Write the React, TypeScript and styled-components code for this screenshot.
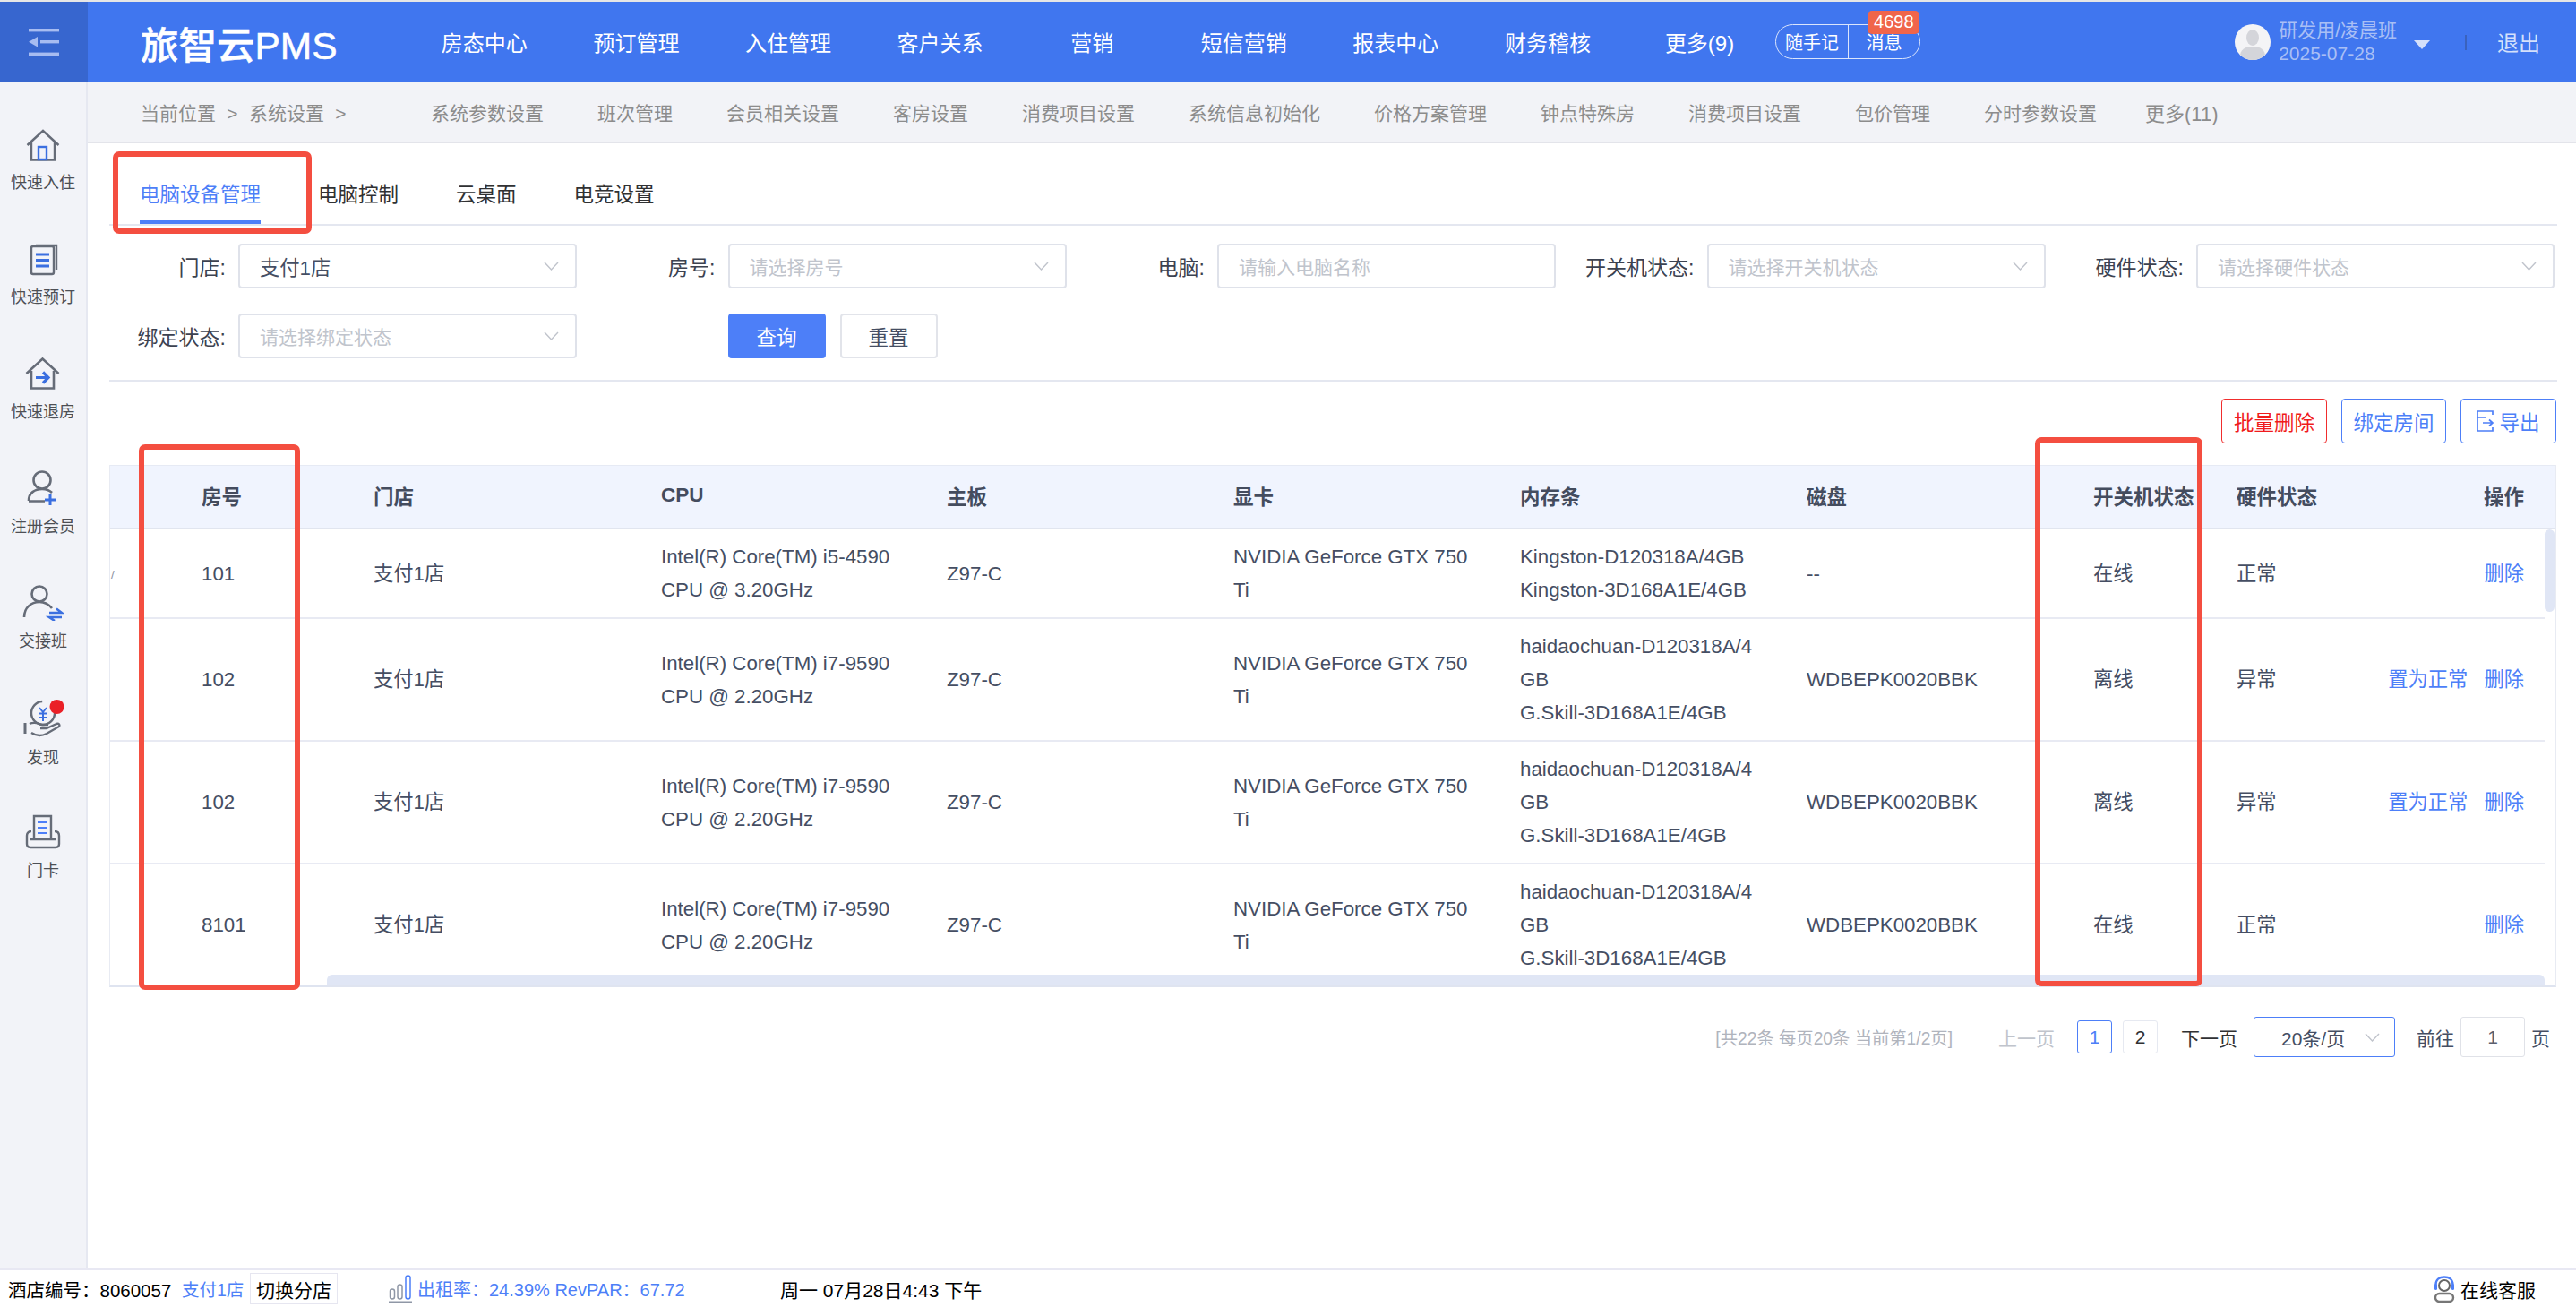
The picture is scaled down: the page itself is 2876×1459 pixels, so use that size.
import React from 'react';
import styled, { createGlobalStyle } from 'styled-components';

const GlobalStyle = createGlobalStyle`
  * { box-sizing: border-box; }
  html, body { margin: 0; padding: 0; height: 100%; background: #fff; }
  body {
    font-family: "Liberation Sans", "Noto Sans CJK SC", sans-serif;
    overflow: hidden;
  }
`;

const Page = styled.div`
  position: relative;
  height: 100vh;
  display: flex;
  flex-direction: column;
  border-top: 2px solid #e6e6e6;
`;

/* ---------- header ---------- */
const Header = styled.header`
  height: 90px;
  flex: none;
  display: flex;
  align-items: center;
  background: #4076ef;
  color: #fff;
`;
const MenuToggle = styled.div`
  width: 98px;
  height: 100%;
  flex: none;
  display: flex;
  align-items: center;
  justify-content: center;
  background: #3766cf;
`;
const Logo = styled.div`
  width: 358px;
  flex: none;
  padding-left: 59px;
  font-size: 42.5px;
  font-weight: 500;
  -webkit-text-stroke: 0.5px #fff;
`;
const TopNav = styled.nav`
  display: flex;
  flex: none;
  margin-top: -2px;
`;
const TopNavItem = styled.a`
  width: 169.6px;
  text-align: center;
  font-size: 24px;
  color: #fff;
`;
const NotePill = styled.div`
  position: relative;
  width: 162px;
  height: 39px;
  margin-top: -2px;
  flex: none;
  display: flex;
  border: 1.5px solid #dbe5fc;
  border-radius: 20px;
`;
const NotePart = styled.span<{ $divided?: boolean }>`
  flex: 1;
  display: flex;
  align-items: center;
  justify-content: center;
  font-size: 20px;
  color: #fff;
  border-left: ${(p) => (p.$divided ? '1.5px solid #dbe5fc' : 'none')};
`;
const Badge = styled.span`
  position: absolute;
  left: 102px;
  top: -16px;
  width: 58px;
  height: 26px;
  display: flex;
  align-items: center;
  justify-content: center;
  border-radius: 5px;
  background: #f0654a;
  color: #fff;
  font-size: 20px;
`;
const UserBlock = styled.div`
  margin-left: auto;
  display: flex;
  align-items: center;
  padding-right: 40px;
`;
const UserText = styled.div`
  margin-left: 9px;
  font-size: 21px;
  line-height: 26px;
  color: #a9bff5;
`;
const Caret = styled.span`
  width: 0;
  height: 0;
  margin-left: 19px;
  margin-top: 6px;
  border-left: 9px solid transparent;
  border-right: 9px solid transparent;
  border-top: 10px solid #d5e0fa;
`;
const UserDivider = styled.span`
  width: 2px;
  height: 17px;
  margin-left: 39px;
  background: #3a62bd;
`;
const Logout = styled.a`
  margin-left: 34px;
  margin-top: -2px;
  font-size: 24px;
  color: #d4e0fb;
`;

/* ---------- body ---------- */
const Body = styled.div`
  flex: 1;
  min-height: 0;
  display: flex;
`;
const Sidebar = styled.aside`
  width: 98px;
  flex: none;
  padding-top: 49px;
  background: #f2f3f8;
  border-right: 2px solid #e6e8f1;
`;
const SideItem = styled.a`
  height: 128px;
  display: flex;
  flex-direction: column;
  align-items: center;
  color: #4d4f55;
  font-size: 18px;
  line-height: 24px;
`;
const SideLabel = styled.span`
  margin-top: 11px;
`;
const Main = styled.main`
  flex: 1;
  min-width: 0;
  display: flex;
  flex-direction: column;
`;
const SubNav = styled.div`
  height: 68px;
  flex: none;
  display: flex;
  align-items: center;
  padding-left: 59px;
  background: #f2f3f7;
  border-bottom: 2px solid #e3e4ea;
  font-size: 21px;
  color: #8c8c8c;
`;
const Crumb = styled.span`
  flex: none;
  width: 324px;
  word-spacing: 6.5px;
`;
const SubNavItem = styled.a`
  flex: none;
  margin-right: 60px;
  &:last-child {
    margin-left: -6px;
    font-size: 22px;
  }
`;
const Content = styled.div`
  flex: 1;
  padding: 0 21px 0 24px;
`;
const Tabs = styled.div`
  height: 92px;
  display: flex;
  padding: 40px 0 0 2px;
  border-bottom: 2px solid #e4e7f0;
`;
const Tab = styled.a<{ $active?: boolean }>`
  position: relative;
  height: 50px;
  padding: 0 32px;
  font-size: 22.5px;
  line-height: 36px;
  color: ${(p) => (p.$active ? '#4d7ff8' : '#303133')};
  &::after {
    content: '';
    display: ${(p) => (p.$active ? 'block' : 'none')};
    position: absolute;
    left: 32px;
    right: 32px;
    bottom: 0;
    height: 4px;
    background: #4d7ff8;
  }
`;

/* ---------- filter form ---------- */
const FilterForm = styled.div`
  display: grid;
  grid-template-columns: repeat(4, 546.5px) 1fr;
  row-gap: 28px;
  margin-top: 20px;
  padding-bottom: 24px;
  border-bottom: 2px solid #e4e7f0;
`;
const FormItem = styled.div`
  display: flex;
  align-items: center;
`;
const FormLabel = styled.label`
  width: 130px;
  flex: none;
  margin-right: 14px;
  text-align: right;
  white-space: nowrap;
  font-size: 23px;
  color: #3c4250;
`;
const Field = styled.div<{ $wide?: boolean }>`
  width: ${(p) => (p.$wide ? '400px' : '378px')};
  height: 50px;
  flex: none;
  display: flex;
  align-items: center;
  justify-content: space-between;
  padding: 0 18px 0 22px;
  border: 2px solid #dfe2ea;
  border-radius: 4px;
  font-size: 21px;
  color: #c0c4cc;
`;
const FieldValue = styled.span`
  color: #454e63;
  font-size: 22.3px;
`;
const FormButtons = styled.div`
  display: flex;
  gap: 16px;
  margin-left: 144px;
`;
const SearchButton = styled.button<{ $primary?: boolean }>`
  width: 109px;
  height: 50px;
  padding: 0;
  border: 2px solid ${(p) => (p.$primary ? '#4d7ff8' : '#e2e4ea')};
  border-radius: 4px;
  background: ${(p) => (p.$primary ? '#4d7ff8' : '#fff')};
  color: ${(p) => (p.$primary ? '#fff' : '#454e63')};
  font: inherit;
  font-size: 22.5px;
`;

/* ---------- toolbar + table ---------- */
const Toolbar = styled.div`
  display: flex;
  justify-content: flex-end;
  gap: 16px;
  margin-top: 19px;
  padding-right: 1px;
`;
const ActionButton = styled.button<{ $danger?: boolean; $w: number }>`
  width: ${(p) => p.$w}px;
  height: 50px;
  padding: 0;
  display: flex;
  align-items: center;
  justify-content: center;
  gap: 6px;
  background: #fff;
  border: 1.5px solid ${(p) => (p.$danger ? '#f02d2d' : '#4d7ff8')};
  border-radius: 4px;
  color: ${(p) => (p.$danger ? '#f01c1c' : '#4d7ff8')};
  font: inherit;
  font-size: 22.5px;
`;
const TableBox = styled.div`
  position: relative;
  width: 2732px;
  margin-top: 24px;
  border-left: 1px solid #e8ebf3;
  border-right: 1px solid #e8ebf3;
  border-bottom: 2px solid #dfe4f0;
`;
const columns = '102px 192px 321px 319px 320px 320px 320px 320px 160px 150px 1fr';
const HeadRow = styled.div`
  height: 72px;
  display: grid;
  grid-template-columns: ${columns};
  align-items: center;
  padding: 0 35px 3px 0;
  background: #f0f4fe;
  border-top: 1px solid #e6eaf4;
  border-bottom: 2px solid #e1e5ef;
  font-size: 22.5px;
  font-weight: 700;
  color: #444c5e;
`;
const HeadCell = styled.div<{ $right?: boolean }>`
  white-space: nowrap;
  text-align: ${(p) => (p.$right ? 'right' : 'left')};
`;
const TableBody = styled.div`
  height: 509px;
  overflow: hidden;
`;
const Row = styled.div`
  display: grid;
  grid-template-columns: ${columns};
  align-items: center;
  margin-right: 12px;
  padding: 12px 23px 12px 0;
  border-bottom: 2px solid #e8eaf3;
  font-size: 22.3px;
  line-height: 37px;
  color: #454e63;
`;
const Cell = styled.div<{ $right?: boolean }>`
  white-space: nowrap;
  display: ${(p) => (p.$right ? 'flex' : 'block')};
  justify-content: flex-end;
  gap: 18px;
`;
const CellLine = styled.div`
  white-space: nowrap;
`;
const HiddenColumnEdge = styled.span`
  font-size: 13px;
  color: #8a90a0;
  padding-left: 1px;
`;
const LinkAction = styled.a`
  color: #4d7ff8;
`;
const ScrollThumbY = styled.div`
  position: absolute;
  right: 1px;
  top: 72px;
  width: 11px;
  height: 92px;
  border-radius: 6px;
  background: #e0e6f5;
`;
const ScrollThumbX = styled.div`
  position: absolute;
  left: 242px;
  right: 12px;
  bottom: 0;
  height: 12px;
  border-radius: 6px 6px 0 0;
  background: #e0e6f5;
`;

/* ---------- pagination ---------- */
const Pager = styled.div`
  display: flex;
  justify-content: flex-end;
  align-items: center;
  height: 45px;
  margin-top: 33px;
  padding-right: 8px;
  font-size: 21px;
  color: #454e63;
`;
const PagerText = styled.span<{ $ml: number; $tone?: string }>`
  margin-left: ${(p) => p.$ml}px;
  color: ${(p) => p.$tone || '#454e63'};
  white-space: nowrap;
`;
const PagerSummary = styled.span`
  font-size: 19.3px;
  color: #b0b4bd;
  white-space: nowrap;
`;
const PageNo = styled.a<{ $ml: number; $active?: boolean }>`
  width: 39px;
  height: 37px;
  margin-left: ${(p) => p.$ml}px;
  display: flex;
  align-items: center;
  justify-content: center;
  border: 1.5px solid ${(p) => (p.$active ? '#4d7ff8' : '#e6e9f1')};
  border-radius: 3px;
  color: ${(p) => (p.$active ? '#4d7ff8' : '#303133')};
`;
const SizeSelect = styled.div`
  width: 158px;
  height: 45px;
  margin-left: 18px;
  padding: 0 16px 0 30px;
  display: flex;
  align-items: center;
  justify-content: space-between;
  border: 1.5px solid #4d7ff8;
  border-radius: 3px;
  color: #454e63;
  font-size: 21px;
`;
const JumpInput = styled.div`
  width: 72px;
  height: 45px;
  margin-left: 7px;
  display: flex;
  align-items: center;
  justify-content: center;
  border: 1.5px solid #e0e2e8;
  border-radius: 3px;
  color: #5a6070;
`;

/* ---------- footer ---------- */
const Footer = styled.footer`
  height: 43px;
  flex: none;
  display: flex;
  align-items: center;
  padding: 0 45px 0 9px;
  background: #fff;
  border-top: 2px solid #e8e8f3;
  font-size: 20.5px;
  color: #000;
  white-space: nowrap;
`;
const StoreNo = styled.span`
  width: 194px;
  flex: none;
`;
const StoreName = styled.a`
  width: 76px;
  flex: none;
  color: #4d7ff8;
  font-size: 19.5px;
`;
const SwitchStore = styled.a`
  width: 98px;
  height: 35px;
  flex: none;
  display: flex;
  align-items: center;
  justify-content: center;
  border: 1.5px solid #e6e6f0;
  font-size: 21px;
`;
const OccupancyBlock = styled.div`
  width: 437px;
  flex: none;
  display: flex;
  align-items: center;
  gap: 6px;
  margin-left: 57px;
  color: #4d7ff8;
  font-size: 20px;
`;
const Clock = styled.span`
  font-size: 21px;
`;
const Support = styled.a`
  margin-left: auto;
  display: flex;
  align-items: center;
  gap: 6px;
  font-size: 21px;
`;

/* ---------- red annotation boxes laid over the screenshot ---------- */
const Mark = styled.div<{ $x: number; $y: number; $w: number; $h: number }>`
  position: absolute;
  left: ${(p) => p.$x}px;
  top: ${(p) => p.$y}px;
  width: ${(p) => p.$w}px;
  height: ${(p) => p.$h}px;
  border: 6px solid #f44e40;
  border-radius: 7px;
  pointer-events: none;
`;

/* ---------- drawings ---------- */
const GRAY = '#666c78';
const BLUE = '#3b6fe0';

const ToggleIcon = () => (
  <svg width="34" height="30" viewBox="0 0 34 30" fill="#a7bcf1">
    <rect x="0" y="0" width="34" height="3.4" />
    <rect x="13" y="13" width="21" height="3.4" />
    <rect x="0" y="26.6" width="34" height="3.4" />
    <path d="M0 14.7 L10 9 V20.4 Z" />
  </svg>
);
const ChevronDown = ({ color = '#c0c4cc' }: { color?: string }) => (
  <svg width="17" height="10" viewBox="0 0 17 10" fill="none" stroke={color} strokeWidth="1.4">
    <path d="M1 1 L8.5 9 L16 1" />
  </svg>
);
const HomeIcon = () => (
  <svg width="40" height="40" viewBox="0 0 40 40" fill="none" strokeWidth="2.4">
    <path d="M2.5 21 L20 5 L37.5 21" stroke={GRAY} />
    <path d="M7 17 V37.5 H33 V17" stroke={GRAY} />
    <rect x="15" y="23" width="9" height="14" stroke={BLUE} />
  </svg>
);
const BookIcon = () => (
  <svg width="40" height="40" viewBox="0 0 40 40" fill="none">
    <rect x="7" y="6" width="25" height="31" rx="2" stroke={GRAY} strokeWidth="2.4" />
    <path d="M12 5 H35 V32" stroke={GRAY} strokeWidth="2.4" />
    <path d="M12 15 H27 M12 21.5 H27 M12 28 H27" stroke={BLUE} strokeWidth="3" />
  </svg>
);
const CheckoutIcon = () => (
  <svg width="40" height="40" viewBox="0 0 40 40" fill="none">
    <path d="M1.5 20 L19.5 3.5 L37.5 20" stroke={GRAY} strokeWidth="2.6" />
    <path d="M7 17 V36.5 H32 V17" stroke={GRAY} strokeWidth="2.6" />
    <path d="M12 24.5 H25 M20 18.5 L26 24.5 L20 30.5" stroke={BLUE} strokeWidth="3.2" />
  </svg>
);
const AddUserIcon = () => (
  <svg width="40" height="40" viewBox="0 0 40 40" fill="none">
    <circle cx="19" cy="11" r="9.5" stroke={GRAY} strokeWidth="2.6" />
    <path d="M4 34 C4 25 11 21 19 21 C24 21 27 22 30 25 M4 34.5 H22" stroke={GRAY} strokeWidth="2.6" />
    <path d="M22 33 H34 M28 27 V39" stroke={BLUE} strokeWidth="3" />
  </svg>
);
const SwapUserIcon = () => (
  <svg width="46" height="40" viewBox="0 0 46 40" fill="none">
    <circle cx="19" cy="10" r="8.5" stroke={GRAY} strokeWidth="2.6" />
    <path d="M2 36 C2 25 10 19 19 19 C25 19 29 21 33 26" stroke={GRAY} strokeWidth="2.6" />
    <path d="M30 31 H44 L38 26.5 M44 36 H30 L36 40" stroke={BLUE} strokeWidth="2.6" />
  </svg>
);
const DiscoverIcon = () => (
  <svg width="46" height="42" viewBox="0 0 46 42" fill="none">
    <circle cx="23" cy="15" r="13" stroke={GRAY} strokeWidth="2.4" strokeDasharray="60 22" />
    <path d="M19 9 L23 14 L27 9 M18.5 15.5 H27.5 M18.5 20 H27.5 M23 14 V24" stroke={BLUE} strokeWidth="2" />
    <path d="M3 26 V38" stroke={GRAY} strokeWidth="3" />
    <path d="M8 27 C14 24 18 27 22 28 H29 M10 37 C16 41 21 41 27 38 L41 30 C42 28 41 26 38 27 L27 32 H20" stroke={GRAY} strokeWidth="2.4" />
    <circle cx="38.5" cy="8" r="8" fill="#ea2027" />
  </svg>
);
const CardIcon = () => (
  <svg width="40" height="40" viewBox="0 0 40 40" fill="none">
    <path d="M10 28 V2 H29 V28 M5 28 H35" stroke={GRAY} strokeWidth="2.4" />
    <path d="M7 19 C3 19 2 22 2 24 V33 C2 36 4 37 6 37 H34 C36 37 38 36 38 33 V24 C38 22 37 19 33 19" stroke={GRAY} strokeWidth="2.4" />
    <path d="M14 9 H25 M14 15 H25 M14 21 H25" stroke="#4d7ff8" strokeWidth="2.2" />
  </svg>
);
const AvatarIcon = () => (
  <svg width="40" height="40" viewBox="0 0 40 40">
    <circle cx="20" cy="20" r="20" fill="#f4f4f6" />
    <ellipse cx="20" cy="15" rx="7" ry="9" fill="#d4d5da" />
    <path d="M6 34 C8 26 14 25 20 25 C26 25 32 26 34 34 C30 38 25 40 20 40 C15 40 10 38 6 34 Z" fill="#d4d5da" />
  </svg>
);
const ExportIcon = () => (
  <svg width="19" height="24" viewBox="0 0 19 24" fill="none" stroke="#4d7ff8" strokeWidth="1.7">
    <path d="M18 5 V1 H1 V23 H18 V19" />
    <path d="M1 8 H10 M7 14 H18 M14 10.5 L18 14 L14 17.5" />
  </svg>
);
const ChartIcon = () => (
  <svg width="26" height="32" viewBox="0 0 26 32" fill="none">
    <rect x="1.5" y="16" width="5" height="11" rx="2.5" stroke="#8f97a6" strokeWidth="1.5" />
    <rect x="10" y="11" width="5" height="16" rx="2.5" stroke="#8f97a6" strokeWidth="1.5" />
    <rect x="19" y="1" width="5" height="26" rx="2.5" stroke="#4d7ff8" strokeWidth="1.5" />
    <path d="M0 30.5 H26" stroke="#8f97a6" strokeWidth="2" />
  </svg>
);
const SupportIcon = () => (
  <svg width="24" height="30" viewBox="0 0 24 30" fill="none">
    <circle cx="12" cy="11" r="6" stroke="#666" strokeWidth="2" />
    <path d="M2.5 13 V10 C2.5 4.5 6.5 1.5 12 1.5 C17.5 1.5 21.5 4.5 21.5 10 V13" stroke="#4d7ff8" strokeWidth="2.4" />
    <rect x="1" y="9" width="3" height="7" rx="1.5" fill="#4d7ff8" />
    <rect x="20" y="9" width="3" height="7" rx="1.5" fill="#4d7ff8" />
    <rect x="2" y="20" width="20" height="9" rx="4.5" stroke="#777" strokeWidth="2.4" />
  </svg>
);

/* ---------- data ---------- */
const topNav = ['房态中心', '预订管理', '入住管理', '客户关系', '营销', '短信营销', '报表中心', '财务稽核', '更多(9)'];
const subNav = [
  '系统参数设置', '班次管理', '会员相关设置', '客房设置', '消费项目设置', '系统信息初始化',
  '价格方案管理', '钟点特殊房', '消费项目设置', '包价管理', '分时参数设置', '更多(11)',
];
const sideItems = [
  { label: '快速入住', icon: <HomeIcon /> },
  { label: '快速预订', icon: <BookIcon /> },
  { label: '快速退房', icon: <CheckoutIcon /> },
  { label: '注册会员', icon: <AddUserIcon /> },
  { label: '交接班', icon: <SwapUserIcon /> },
  { label: '发现', icon: <DiscoverIcon /> },
  { label: '门卡', icon: <CardIcon /> },
];
const tabs = ['电脑设备管理', '电脑控制', '云桌面', '电竞设置'];
const headers = ['房号', '门店', 'CPU', '主板', '显卡', '内存条', '磁盘', '开关机状态', '硬件状态'];
const gpu = ['NVIDIA GeForce GTX 750', 'Ti'];
const ram = ['haidaochuan-D120318A/4', 'GB', 'G.Skill-3D168A1E/4GB'];
const cpu7 = ['Intel(R) Core(TM) i7-9590', 'CPU @ 2.20GHz'];
const rows = [
  {
    room: '101', cpu: ['Intel(R) Core(TM) i5-4590', 'CPU @ 3.20GHz'],
    ram: ['Kingston-D120318A/4GB', 'Kingston-3D168A1E/4GB'], disk: '--', power: '在线', hw: '正常', fix: false,
  },
  { room: '102', cpu: cpu7, ram, disk: 'WDBEPK0020BBK', power: '离线', hw: '异常', fix: true },
  { room: '102', cpu: cpu7, ram, disk: 'WDBEPK0020BBK', power: '离线', hw: '异常', fix: true },
  { room: '8101', cpu: cpu7, ram, disk: 'WDBEPK0020BBK', power: '在线', hw: '正常', fix: false },
];

const App = () => (
  <Page>
    <GlobalStyle />
    <Header>
      <MenuToggle><ToggleIcon /></MenuToggle>
      <Logo>旅智云PMS</Logo>
      <TopNav>
        {topNav.map((t) => <TopNavItem key={t}>{t}</TopNavItem>)}
      </TopNav>
      <NotePill>
        <NotePart>随手记</NotePart>
        <NotePart $divided>消息</NotePart>
        <Badge>4698</Badge>
      </NotePill>
      <UserBlock>
        <AvatarIcon />
        <UserText>研发用/凌晨班<br />2025-07-28</UserText>
        <Caret />
        <UserDivider />
        <Logout>退出</Logout>
      </UserBlock>
    </Header>
    <Body>
      <Sidebar>
        {sideItems.map((s) => (
          <SideItem key={s.label}>
            {s.icon}
            <SideLabel>{s.label}</SideLabel>
          </SideItem>
        ))}
      </Sidebar>
      <Main>
        <SubNav>
          <Crumb>当前位置 &gt; 系统设置 &gt;</Crumb>
          {subNav.map((t, i) => <SubNavItem key={i}>{t}</SubNavItem>)}
        </SubNav>
        <Content>
          <Tabs>
            {tabs.map((t, i) => <Tab key={t} $active={i === 0}>{t}</Tab>)}
          </Tabs>
          <FilterForm>
            <FormItem>
              <FormLabel>门店:</FormLabel>
              <Field><FieldValue>支付1店</FieldValue><ChevronDown /></Field>
            </FormItem>
            <FormItem>
              <FormLabel>房号:</FormLabel>
              <Field>请选择房号<ChevronDown /></Field>
            </FormItem>
            <FormItem>
              <FormLabel>电脑:</FormLabel>
              <Field>请输入电脑名称</Field>
            </FormItem>
            <FormItem>
              <FormLabel>开关机状态:</FormLabel>
              <Field>请选择开关机状态<ChevronDown /></Field>
            </FormItem>
            <FormItem>
              <FormLabel>硬件状态:</FormLabel>
              <Field $wide>请选择硬件状态<ChevronDown /></Field>
            </FormItem>
            <FormItem>
              <FormLabel>绑定状态:</FormLabel>
              <Field>请选择绑定状态<ChevronDown /></Field>
            </FormItem>
            <FormButtons>
              <SearchButton $primary>查询</SearchButton>
              <SearchButton>重置</SearchButton>
            </FormButtons>
          </FilterForm>
          <Toolbar>
            <ActionButton $danger $w={118}>批量删除</ActionButton>
            <ActionButton $w={117}>绑定房间</ActionButton>
            <ActionButton $w={107}><ExportIcon />导出</ActionButton>
          </Toolbar>
          <TableBox>
            <HeadRow>
              <div />
              {headers.map((h) => <HeadCell key={h}>{h}</HeadCell>)}
              <HeadCell $right>操作</HeadCell>
            </HeadRow>
            <TableBody>
              {rows.map((r, i) => (
                <Row key={i}>
                  <Cell>{i === 0 && <HiddenColumnEdge>/</HiddenColumnEdge>}</Cell>
                  <Cell>{r.room}</Cell>
                  <Cell>支付1店</Cell>
                  <Cell>{r.cpu.map((l) => <CellLine key={l}>{l}</CellLine>)}</Cell>
                  <Cell>Z97-C</Cell>
                  <Cell>{gpu.map((l) => <CellLine key={l}>{l}</CellLine>)}</Cell>
                  <Cell>{r.ram.map((l) => <CellLine key={l}>{l}</CellLine>)}</Cell>
                  <Cell>{r.disk}</Cell>
                  <Cell>{r.power}</Cell>
                  <Cell>{r.hw}</Cell>
                  <Cell $right>
                    {r.fix && <LinkAction>置为正常</LinkAction>}
                    <LinkAction>删除</LinkAction>
                  </Cell>
                </Row>
              ))}
            </TableBody>
            <ScrollThumbY />
            <ScrollThumbX />
          </TableBox>
          <Pager>
            <PagerSummary>[共22条 每页20条 当前第1/2页]</PagerSummary>
            <PagerText $ml={51} $tone="#c0c4cc">上一页</PagerText>
            <PageNo $ml={25} $active>1</PageNo>
            <PageNo $ml={12}>2</PageNo>
            <PagerText $ml={26} $tone="#303133">下一页</PagerText>
            <SizeSelect>20条/页<ChevronDown /></SizeSelect>
            <PagerText $ml={24}>前往</PagerText>
            <JumpInput>1</JumpInput>
            <PagerText $ml={7}>页</PagerText>
          </Pager>
        </Content>
      </Main>
    </Body>
    <Footer>
      <StoreNo>酒店编号：8060057</StoreNo>
      <StoreName>支付1店</StoreName>
      <SwitchStore>切换分店</SwitchStore>
      <OccupancyBlock>
        <ChartIcon />
        <span>出租率：24.39% RevPAR：67.72</span>
      </OccupancyBlock>
      <Clock>周一 07月28日4:43 下午</Clock>
      <Support><SupportIcon />在线客服</Support>
    </Footer>
    <Mark $x={126} $y={167} $w={222} $h={92} />
    <Mark $x={155} $y={494} $w={180} $h={609} />
    <Mark $x={2272} $y={486} $w={187} $h={613} />
  </Page>
);

export default App;
